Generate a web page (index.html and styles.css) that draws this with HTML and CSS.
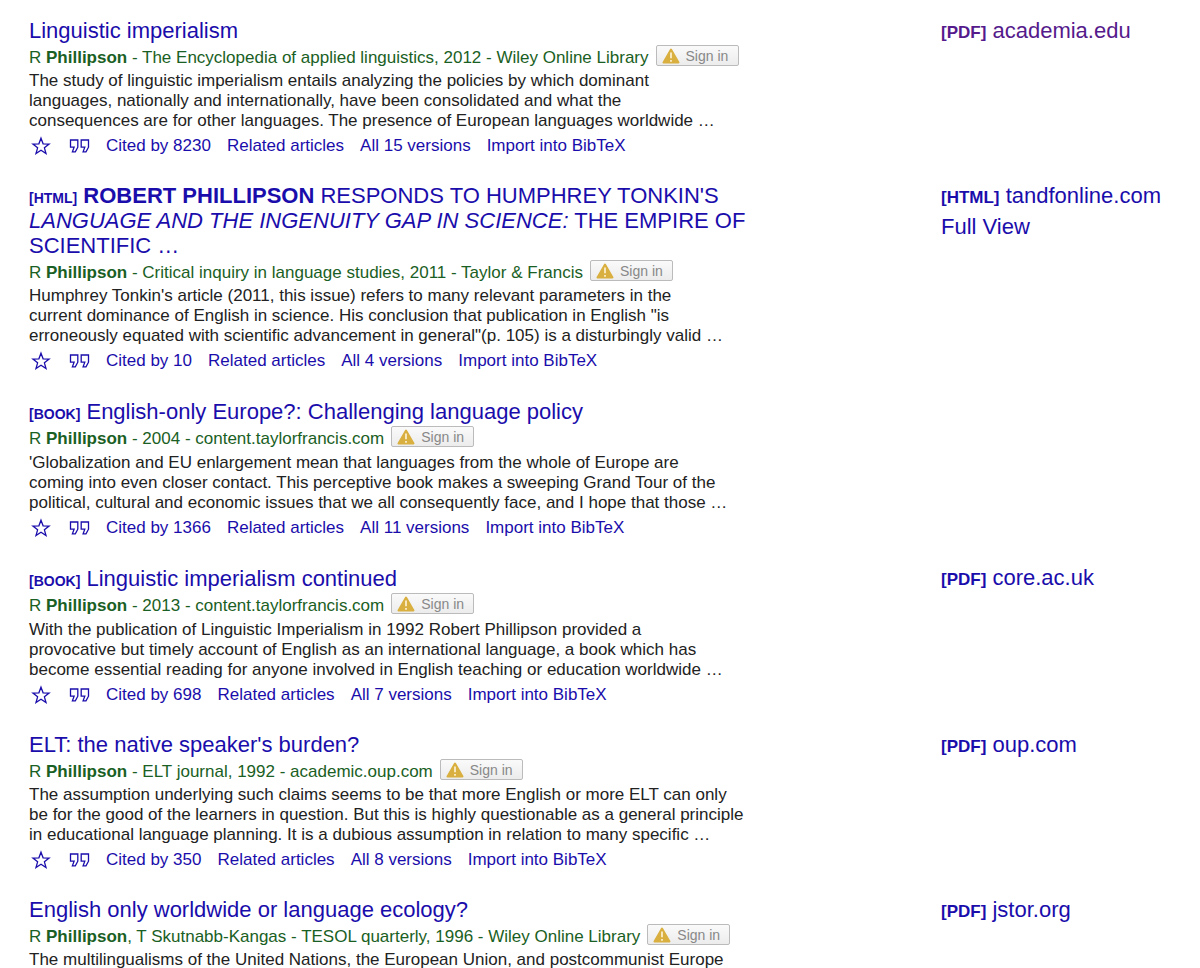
FILE: index.html
```html
<!DOCTYPE html>
<html lang="en">
<head>
<meta charset="utf-8">
<meta name="viewport" content="width=device-width, initial-scale=1">
<title>Scholar results</title>
<link rel="stylesheet" href="styles.css">
</head>
<body>
<svg class="sprite" aria-hidden="true">
  <symbol id="star" viewBox="0 0 20 20"><path d="M10 2.2 12.1 7.8 18.1 8.1 13.4 11.8 15 17.6 10 14.3 5 17.6 6.6 11.8 1.9 8.1 7.9 7.8Z" fill="none" stroke="currentColor" stroke-width="1.3"/></symbol>
  <symbol id="quote" viewBox="0 0 20 14"><path d="M1 1H8.3V8.2L5.8 12.8H2.9L4.6 8.2H1ZM11.7 1H19V8.2L16.5 12.8H13.6L15.3 8.2H11.7Z" fill="none" stroke="currentColor" stroke-width="1.3"/></symbol>
  <symbol id="warn" viewBox="0 0 18 16"><path d="M9 1.5 16.5 14.5H1.5Z" fill="#d9b040" stroke="#d9b040" stroke-width="2" stroke-linejoin="round"/><path d="M9 4.5V10.3M9 11.9V13.7" stroke="#fff6dc" stroke-width="1.6"/></symbol>
</svg>
<main class="results">
  <article class="result">
    <div class="main">
      <h3 class="title"><a href="#">Linguistic imperialism</a></h3>
      <div class="meta"><span>R <b>Phillipson</b> - The Encyclopedia of applied linguistics, 2012 - Wiley Online Library</span><button class="signin" type="button"><svg><use href="#warn"/></svg>Sign in</button></div>
      <p class="snippet">The study of linguistic imperialism entails analyzing the policies by which dominant<br>languages, nationally and internationally, have been consolidated and what the<br>consequences are for other languages. The presence of European languages worldwide …</p>
      <div class="actions"><a class="save" href="#" aria-label="Save"><svg><use href="#star"/></svg></a><a class="cite" href="#" aria-label="Cite"><svg><use href="#quote"/></svg></a><a href="#">Cited by 8230</a><a href="#">Related articles</a><a href="#">All 15 versions</a><a href="#">Import into BibTeX</a></div>
    </div>
    <div class="side"><a class="visited" href="#"><b>[PDF]</b> academia.edu</a></div>
  </article>
  <article class="result">
    <div class="main">
      <h3 class="title"><span class="tag">[HTML]</span> <a href="#"><b>ROBERT PHILLIPSON</b> RESPONDS TO HUMPHREY TONKIN'S <i>LANGUAGE AND THE INGENUITY GAP IN SCIENCE:</i> THE EMPIRE OF SCIENTIFIC …</a></h3>
      <div class="meta"><span>R <b>Phillipson</b> - Critical inquiry in language studies, 2011 - Taylor &amp; Francis</span><button class="signin" type="button"><svg><use href="#warn"/></svg>Sign in</button></div>
      <p class="snippet">Humphrey Tonkin's article (2011, this issue) refers to many relevant parameters in the<br>current dominance of English in science. His conclusion that publication in English "is<br>erroneously equated with scientific advancement in general"(p. 105) is a disturbingly valid …</p>
      <div class="actions"><a class="save" href="#" aria-label="Save"><svg><use href="#star"/></svg></a><a class="cite" href="#" aria-label="Cite"><svg><use href="#quote"/></svg></a><a href="#">Cited by 10</a><a href="#">Related articles</a><a href="#">All 4 versions</a><a href="#">Import into BibTeX</a></div>
    </div>
    <div class="side"><a href="#"><b>[HTML]</b> tandfonline.com</a><a href="#">Full View</a></div>
  </article>
  <article class="result book">
    <div class="main">
      <h3 class="title"><span class="tag">[BOOK]</span> <a href="#">English-only Europe?: Challenging language policy</a></h3>
      <div class="meta"><span>R <b>Phillipson</b> - 2004 - content.taylorfrancis.com</span><button class="signin" type="button"><svg><use href="#warn"/></svg>Sign in</button></div>
      <p class="snippet">'Globalization and EU enlargement mean that languages from the whole of Europe are<br>coming into even closer contact. This perceptive book makes a sweeping Grand Tour of the<br>political, cultural and economic issues that we all consequently face, and I hope that those …</p>
      <div class="actions"><a class="save" href="#" aria-label="Save"><svg><use href="#star"/></svg></a><a class="cite" href="#" aria-label="Cite"><svg><use href="#quote"/></svg></a><a href="#">Cited by 1366</a><a href="#">Related articles</a><a href="#">All 11 versions</a><a href="#">Import into BibTeX</a></div>
    </div>
  </article>
  <article class="result book">
    <div class="main">
      <h3 class="title"><span class="tag">[BOOK]</span> <a href="#">Linguistic imperialism continued</a></h3>
      <div class="meta"><span>R <b>Phillipson</b> - 2013 - content.taylorfrancis.com</span><button class="signin" type="button"><svg><use href="#warn"/></svg>Sign in</button></div>
      <p class="snippet">With the publication of Linguistic Imperialism in 1992 Robert Phillipson provided a<br>provocative but timely account of English as an international language, a book which has<br>become essential reading for anyone involved in English teaching or education worldwide …</p>
      <div class="actions"><a class="save" href="#" aria-label="Save"><svg><use href="#star"/></svg></a><a class="cite" href="#" aria-label="Cite"><svg><use href="#quote"/></svg></a><a href="#">Cited by 698</a><a href="#">Related articles</a><a href="#">All 7 versions</a><a href="#">Import into BibTeX</a></div>
    </div>
    <div class="side"><a href="#"><b>[PDF]</b> core.ac.uk</a></div>
  </article>
  <article class="result">
    <div class="main">
      <h3 class="title"><a href="#">ELT: the native speaker's burden?</a></h3>
      <div class="meta"><span>R <b>Phillipson</b> - ELT journal, 1992 - academic.oup.com</span><button class="signin" type="button"><svg><use href="#warn"/></svg>Sign in</button></div>
      <p class="snippet">The assumption underlying such claims seems to be that more English or more ELT can only<br>be for the good of the learners in question. But this is highly questionable as a general principle<br>in educational language planning. It is a dubious assumption in relation to many specific …</p>
      <div class="actions"><a class="save" href="#" aria-label="Save"><svg><use href="#star"/></svg></a><a class="cite" href="#" aria-label="Cite"><svg><use href="#quote"/></svg></a><a href="#">Cited by 350</a><a href="#">Related articles</a><a href="#">All 8 versions</a><a href="#">Import into BibTeX</a></div>
    </div>
    <div class="side"><a href="#"><b>[PDF]</b> oup.com</a></div>
  </article>
  <article class="result">
    <div class="main">
      <h3 class="title"><a href="#">English only worldwide or language ecology?</a></h3>
      <div class="meta"><span>R <b>Phillipson</b>, T Skutnabb-Kangas - TESOL quarterly, 1996 - Wiley Online Library</span><button class="signin" type="button"><svg><use href="#warn"/></svg>Sign in</button></div>
      <p class="snippet">The multilingualisms of the United Nations, the European Union, and postcommunist Europe</p>
    </div>
    <div class="side"><a href="#"><b>[PDF]</b> jstor.org</a></div>
  </article>
</main>
</body>
</html>
```
FILE: styles.css
```css
body {
  margin: 0;
  background: #fff;
  color: #222;
  font: 17px/20px "Liberation Sans", Arial, sans-serif;
}
a { color: #1a0dab; text-decoration: none; }
a:hover { text-decoration: underline; }
.sprite { display: none; }
.results {
  display: flex;
  flex-direction: column;
  gap: 27px;
  padding: 18px 29px 0;
}
.result {
  display: grid;
  grid-template-columns: minmax(0, 1fr) 230px;
}
.main { max-width: 740px; }
.title {
  margin: 0;
  color: #1a0dab;
  font-size: 22px;
  font-weight: 400;
  line-height: 25px;
}
.tag { font-size: 14px; font-weight: 700; line-height: 1; }
.meta {
  display: flex;
  align-items: flex-start;
  gap: 7px;
  padding-top: 2px;
  color: #1a6024;
  line-height: 26px;
  white-space: nowrap;
}
.signin {
  display: flex;
  align-items: center;
  gap: 6px;
  box-sizing: border-box;
  width: 83px;
  height: 21px;
  padding: 0 5px;
  border: 1px solid #bbb;
  border-radius: 2px;
  background: linear-gradient(#fafafa, #ececec);
  color: #888;
  font: 14px/18px "Liberation Sans", Arial, sans-serif;
}
.signin svg { width: 18px; height: 16px; flex: none; }
.snippet { margin: 0; }
.actions {
  display: flex;
  align-items: center;
  gap: 16px;
  padding-top: 5px;
}
.actions svg { display: block; width: 20px; height: 20px; }
.save { padding: 0 2px; }
.actions .cite svg { width: 21px; height: 14px; }
.book .title { padding-top: 1px; }
.book .meta { padding-bottom: 1px; }
.side {
  display: flex;
  flex-direction: column;
  gap: 6px;
  font-size: 22px;
  line-height: 25px;
}
.side b { font-size: 17px; line-height: 1; }
.side .visited { color: #551a8b; }
```
